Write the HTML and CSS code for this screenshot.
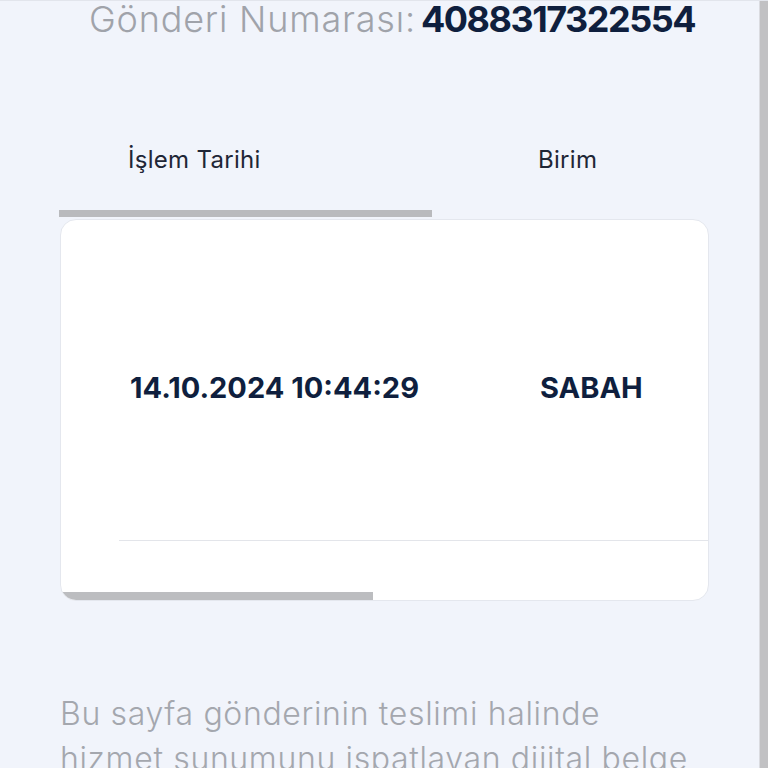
FILE: index.html
```
<!DOCTYPE html>
<html lang="tr">
<head>
<meta charset="utf-8">
<link rel="stylesheet" href="styles.css">
</head>
<body>
<div class="page">
  <main class="content">
    <h1 class="tracking"><span class="label">Gönderi Numarası:</span> <strong class="number">4088317322554</strong></h1>
    <section class="table">
      <div class="thead">
        <div class="cols head-cols">
          <span>İşlem Tarihi</span>
          <span>Birim</span>
        </div>
        <div class="hbar"><div class="thumb thumb-head"></div></div>
      </div>
      <div class="card">
        <div class="cols data-cols">
          <span>14.10.2024 10:44:29</span>
          <span>SABAH</span>
        </div>
        <div class="divider"></div>
        <div class="card-foot">
          <div class="thumb thumb-card"></div>
        </div>
      </div>
    </section>
    <p class="note">Bu sayfa gönderinin teslimi halinde hizmet sunumunu ispatlayan dijital belge niteliğindedir.</p>
  </main>
  <div class="vscroll"></div>
</div>
</body>
</html>
```
FILE: styles.css
```
html, body {
  margin: 0;
  padding: 0;
  height: 100%;
  overflow: hidden;
}
body {
  background: #f1f4fb;
  font-family: "Inter", "Noto Sans", sans-serif;
}
.page {
  display: flex;
  height: 768px;
  border-top: 1px solid #e2e5ec;
  box-sizing: border-box;
}
.content {
  flex: 1;
  padding: 0 50px 0 60px;
  overflow: hidden;
}
.vscroll {
  width: 8px;
  background: #c1c1c3;
  border-left: 1px solid #dadbe0;
}
.tracking {
  margin: -4px 0 0 0;
  padding-left: 29px;
  font-size: 36px;
  line-height: 44px;
  font-weight: 300;
  color: #a0a3aa;
  white-space: nowrap;
  word-spacing: -5px;
}
.label {
  letter-spacing: 0.8px;
  word-spacing: normal;
}
.number {
  font-weight: 700;
  color: #0f1f3e;
  letter-spacing: -1.5px;
}
.table {
  margin-top: 104px;
}
.cols {
  display: grid;
  grid-template-columns: 410px 1fr;
  padding-left: 68px;
}
.head-cols {
  font-size: 24px;
  line-height: 30px;
  color: #1f2636;
  height: 65px;
  letter-spacing: 0.3px;
}
.hbar {
  height: 7px;
  margin-left: -1px;
}
.thumb {
  background: #b9babd;
  height: 100%;
}
.thumb-head {
  width: 373px;
}
.card {
  margin-top: 2px;
  height: 382px;
  box-sizing: border-box;
  background: #ffffff;
  border: 1px solid #e4e7ee;
  border-radius: 16px;
  display: flex;
  flex-direction: column;
  overflow: hidden;
}
.data-cols {
  padding-top: 148px;
  padding-left: 69px;
  height: 172px;
  font-size: 29px;
  line-height: 40px;
  font-weight: 700;
  color: #0f1f3e;
}
.divider {
  margin-left: 58px;
  height: 1px;
  background: #e3e5ea;
}
.card-foot {
  flex: 1;
  display: flex;
  align-items: flex-end;
}
.thumb-card {
  width: 312px;
  height: 8px;
  background: #bcbdc0;
}
.note {
  margin: 90px 0 0 0;
  font-size: 32px;
  line-height: 45px;
  font-weight: 300;
  letter-spacing: 0.65px;
  color: #a4a7ae;
  max-width: 650px;
}
```
